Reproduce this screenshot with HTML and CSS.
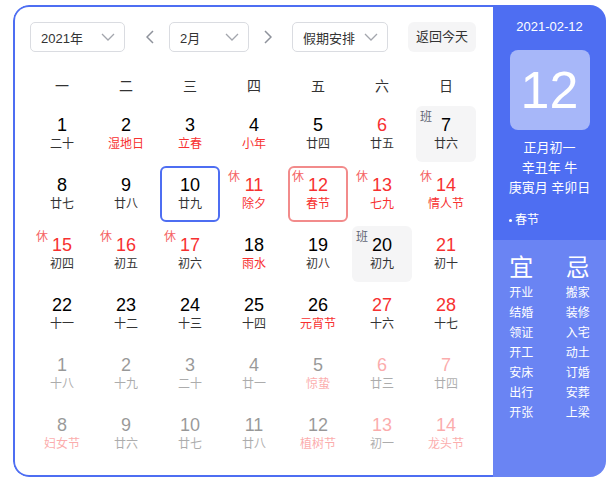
FILE: index.html
```html
<!DOCTYPE html>
<html lang="zh-CN">
<head>
<meta charset="utf-8">
<title>万年历</title>
<link rel="stylesheet" href="styles.css">
</head>
<body>
<div class="calendar">
  <div class="main">
    <div class="toolbar">
      <div class="select sel-year"><span>2021年</span><svg class="chev" width="14" height="8" viewBox="0 0 14 8"><polyline points="1,1 7,7 13,1" fill="none" stroke="#a3a6ad" stroke-width="1.3"/></svg></div>
      <svg class="arrow prev" width="8" height="14" viewBox="0 0 8 14"><polyline points="7,1 1,7 7,13" fill="none" stroke="#8e929b" stroke-width="1.5"/></svg>
      <div class="select sel-month"><span>2月</span><svg class="chev" width="14" height="8" viewBox="0 0 14 8"><polyline points="1,1 7,7 13,1" fill="none" stroke="#a3a6ad" stroke-width="1.3"/></svg></div>
      <svg class="arrow next" width="8" height="14" viewBox="0 0 8 14"><polyline points="1,1 7,7 1,13" fill="none" stroke="#8e929b" stroke-width="1.5"/></svg>
      <div class="select sel-holiday"><span>假期安排</span><svg class="chev" width="14" height="8" viewBox="0 0 14 8"><polyline points="1,1 7,7 13,1" fill="none" stroke="#a3a6ad" stroke-width="1.3"/></svg></div>
      <div class="today-btn">返回今天</div>
    </div>
    <div class="weekdays">
      <span>一</span><span>二</span><span>三</span><span>四</span><span>五</span><span>六</span><span>日</span>
    </div>
    <div class="grid">
      <div class="cell"><div class="num">1</div><div class="lunar">二十</div></div>
      <div class="cell"><div class="num">2</div><div class="lunar red">湿地日</div></div>
      <div class="cell"><div class="num">3</div><div class="lunar red">立春</div></div>
      <div class="cell"><div class="num">4</div><div class="lunar red">小年</div></div>
      <div class="cell"><div class="num">5</div><div class="lunar">廿四</div></div>
      <div class="cell"><div class="num red">6</div><div class="lunar">廿五</div></div>
      <div class="cell work"><span class="tag ban">班</span><div class="num">7</div><div class="lunar">廿六</div></div>

      <div class="cell"><div class="num">8</div><div class="lunar">廿七</div></div>
      <div class="cell"><div class="num">9</div><div class="lunar">廿八</div></div>
      <div class="cell selected"><div class="num">10</div><div class="lunar">廿九</div></div>
      <div class="cell"><span class="tag xiu">休</span><div class="num red">11</div><div class="lunar red">除夕</div></div>
      <div class="cell today"><span class="tag xiu">休</span><div class="num red">12</div><div class="lunar red">春节</div></div>
      <div class="cell"><span class="tag xiu">休</span><div class="num red">13</div><div class="lunar red">七九</div></div>
      <div class="cell"><span class="tag xiu">休</span><div class="num red">14</div><div class="lunar red">情人节</div></div>

      <div class="cell"><span class="tag xiu">休</span><div class="num red">15</div><div class="lunar">初四</div></div>
      <div class="cell"><span class="tag xiu">休</span><div class="num red">16</div><div class="lunar">初五</div></div>
      <div class="cell"><span class="tag xiu">休</span><div class="num red">17</div><div class="lunar">初六</div></div>
      <div class="cell"><div class="num">18</div><div class="lunar red">雨水</div></div>
      <div class="cell"><div class="num">19</div><div class="lunar">初八</div></div>
      <div class="cell work"><span class="tag ban">班</span><div class="num">20</div><div class="lunar">初九</div></div>
      <div class="cell"><div class="num red">21</div><div class="lunar">初十</div></div>

      <div class="cell"><div class="num">22</div><div class="lunar">十一</div></div>
      <div class="cell"><div class="num">23</div><div class="lunar">十二</div></div>
      <div class="cell"><div class="num">24</div><div class="lunar">十三</div></div>
      <div class="cell"><div class="num">25</div><div class="lunar">十四</div></div>
      <div class="cell"><div class="num">26</div><div class="lunar red">元宵节</div></div>
      <div class="cell"><div class="num red">27</div><div class="lunar">十六</div></div>
      <div class="cell"><div class="num red">28</div><div class="lunar">十七</div></div>

      <div class="cell other"><div class="num">1</div><div class="lunar">十八</div></div>
      <div class="cell other"><div class="num">2</div><div class="lunar">十九</div></div>
      <div class="cell other"><div class="num">3</div><div class="lunar">二十</div></div>
      <div class="cell other"><div class="num">4</div><div class="lunar">廿一</div></div>
      <div class="cell other"><div class="num">5</div><div class="lunar red">惊蛰</div></div>
      <div class="cell other"><div class="num red">6</div><div class="lunar">廿三</div></div>
      <div class="cell other"><div class="num red">7</div><div class="lunar">廿四</div></div>

      <div class="cell other"><div class="num">8</div><div class="lunar red">妇女节</div></div>
      <div class="cell other"><div class="num">9</div><div class="lunar">廿六</div></div>
      <div class="cell other"><div class="num">10</div><div class="lunar">廿七</div></div>
      <div class="cell other"><div class="num">11</div><div class="lunar">廿八</div></div>
      <div class="cell other"><div class="num">12</div><div class="lunar red">植树节</div></div>
      <div class="cell other"><div class="num red">13</div><div class="lunar">初一</div></div>
      <div class="cell other"><div class="num red">14</div><div class="lunar red">龙头节</div></div>
    </div>
  </div>
  <div class="panel">
    <div class="panel-top">
      <div class="p-date">2021-02-12</div>
      <div class="bigday">12</div>
      <div class="p-lunar">
        <div>正月初一</div>
        <div>辛丑年 牛</div>
        <div>庚寅月 辛卯日</div>
      </div>
      <div class="p-fest"><span class="dot"></span>春节</div>
    </div>
    <div class="panel-bottom">
      <div class="yj">
        <div class="yj-title">宜</div>
        <div>开业</div><div>结婚</div><div>领证</div><div>开工</div><div>安床</div><div>出行</div><div>开张</div>
      </div>
      <div class="yj">
        <div class="yj-title">忌</div>
        <div>搬家</div><div>装修</div><div>入宅</div><div>动土</div><div>订婚</div><div>安葬</div><div>上梁</div>
      </div>
    </div>
  </div>
</div>
</body>
</html>
```
FILE: styles.css
```css
body {
  margin: 0;
  background: #fff;
  font-family: "Liberation Sans", "Noto Sans CJK SC", sans-serif;
}

.calendar {
  display: flex;
  width: 593px;
  height: 472px;
  margin: 5px 0 0 13px;
  border-radius: 16px;
  overflow: hidden;
}

.main {
  width: 480px;
  box-sizing: border-box;
  border: 2px solid #4e6ef2;
  border-right: 0;
  border-radius: 16px 0 0 16px;
  padding: 15px 0 0 15px;
  background: #fff;
}

.toolbar {
  display: flex;
  align-items: center;
  height: 30px;
}

.select {
  display: flex;
  align-items: center;
  justify-content: space-between;
  box-sizing: border-box;
  height: 30px;
  border: 1px solid #dadce1;
  border-radius: 5px;
  padding: 0 9px 0 10px;
  font-size: 13px;
  color: #333;
}

.sel-year { width: 95px; }
.sel-month { width: 80px; }
.sel-holiday { width: 96px; }

.arrow { display: block; }
.arrow.prev { margin: 0 15px 0 21px; }
.arrow.next { margin: 0 20px 0 15px; }

.today-btn {
  margin-left: 20px;
  width: 68px;
  height: 30px;
  line-height: 30px;
  text-align: center;
  background: #f5f5f6;
  border-radius: 6px;
  font-size: 13px;
  color: #333;
}

.weekdays {
  display: grid;
  grid-template-columns: repeat(7, 60px);
  column-gap: 4px;
  margin: 24px 0 0 2px;
  font-size: 14px;
  line-height: 20px;
  color: #333;
  text-align: center;
}

.grid {
  display: grid;
  grid-template-columns: repeat(7, 60px);
  grid-auto-rows: 56px;
  gap: 4px;
  margin: 10px 0 0 2px;
}

.cell {
  position: relative;
  box-sizing: border-box;
  border: 2px solid transparent;
  border-radius: 6px;
  padding-top: 6px;
  text-align: center;
}

.num {
  font-size: 18px;
  line-height: 22px;
  color: #000;
}

.lunar {
  font-size: 12px;
  line-height: 16px;
  color: #333;
}

.num.red, .lunar.red { color: #f73131; }

.tag {
  position: absolute;
  top: 3px;
  left: 2px;
  font-size: 12px;
  line-height: 12px;
}

.tag.xiu { color: #f56464; }
.tag.ban { color: #626675; }

.cell.work { background: #f5f5f6; }
.cell.selected { border-color: #4e6ef2; }
.cell.today { border-color: #f28b8b; }
.cell.other { opacity: 0.4; }

.panel {
  width: 113px;
  display: flex;
  flex-direction: column;
  color: #fff;
}

.panel-top {
  background: #4e6ef2;
  padding: 12px 0 10px;
  text-align: center;
}

.p-date {
  font-size: 13px;
  line-height: 20px;
}

.bigday {
  width: 80px;
  height: 80px;
  margin: 13px auto 0;
  background: rgba(255, 255, 255, 0.5);
  border-radius: 8px;
  font-size: 52px;
  line-height: 80px;
}

.p-lunar {
  margin-top: 8px;
  font-size: 13px;
  line-height: 20px;
}

.p-fest {
  margin-top: 12px;
  padding-left: 16px;
  text-align: left;
  font-size: 12px;
  line-height: 20px;
  display: flex;
  align-items: center;
}

.dot {
  width: 3px;
  height: 3px;
  border-radius: 50%;
  background: #fff;
  margin-right: 3px;
}

.panel-bottom {
  flex: 1;
  background: #6a84f3;
  display: grid;
  grid-template-columns: 1fr 1fr;
  align-content: start;
  padding-top: 13px;
}

.yj {
  text-align: center;
  font-size: 12px;
  line-height: 20px;
}

.yj-title {
  font-size: 24px;
  line-height: 30px;
}
```
